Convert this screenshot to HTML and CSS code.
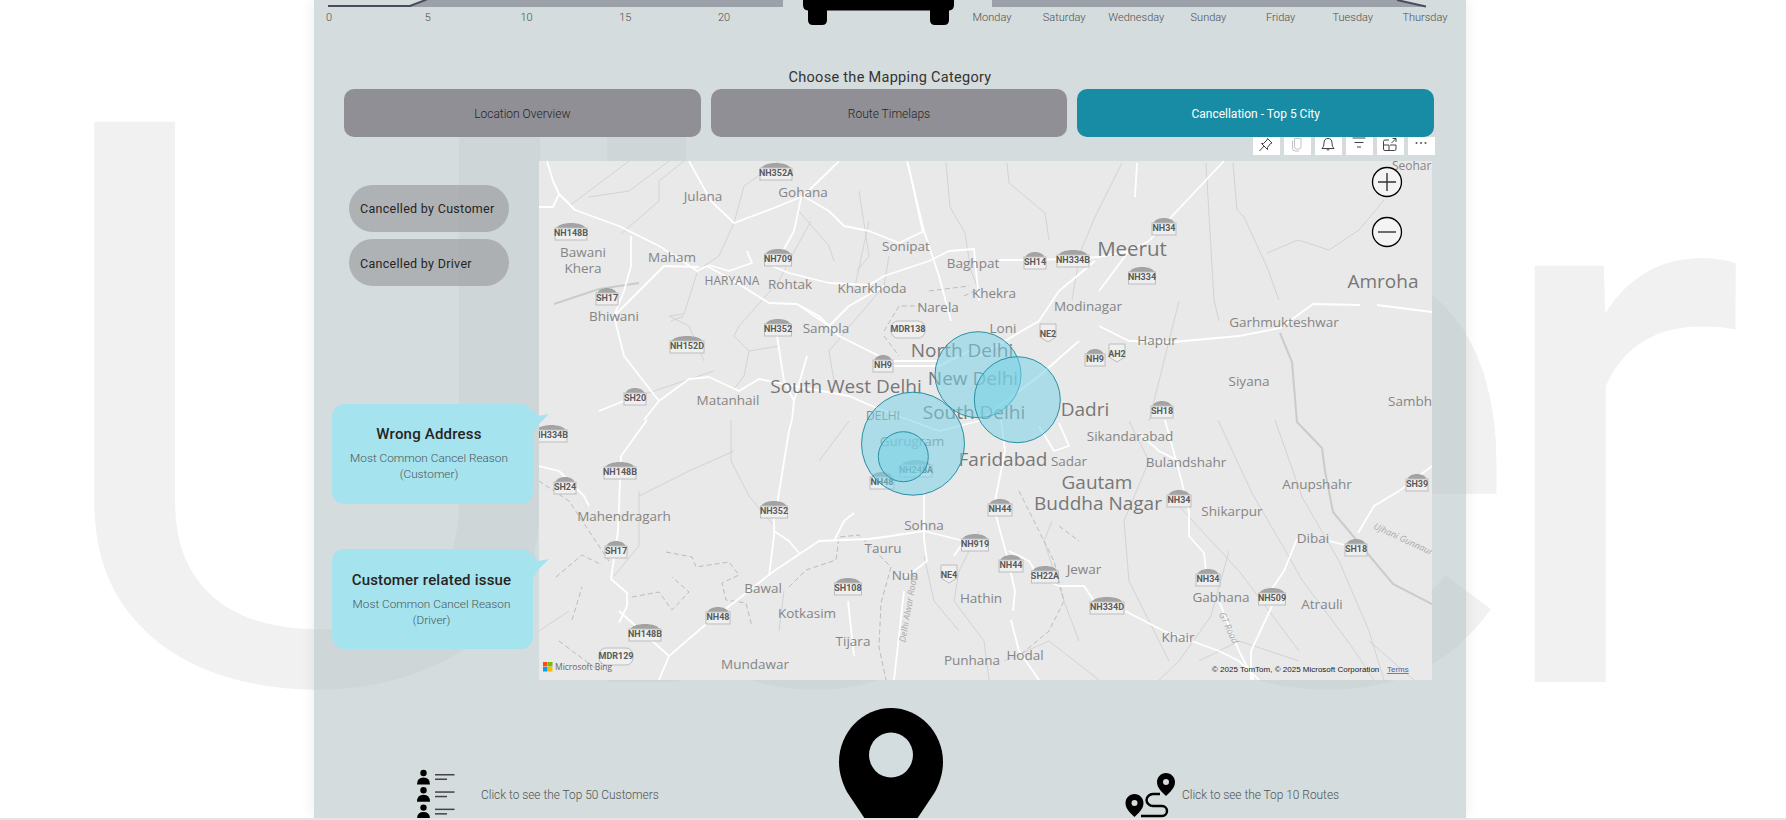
FILE: index.html
```html
<!DOCTYPE html>
<html lang="en">
<head>
    <meta charset="UTF-8">
    <title>Uber Dashboard</title>
    <link rel="stylesheet" href="styles.css">
</head>
<body>
<div class="page">
    <div class="watermark"><span class="wm-u">U</span><span class="wm-b">b</span><span class="wm-e">e</span><span class="wm-r">r</span></div>

    <main class="panel">
        <section class="top-strip">
            <div class="chart chart-left">
                <svg class="chart-area" width="455" height="8" viewBox="0 0 455 8">
                    <polygon points="0,6 82,6 100,0 455,0 455,7 0,7" fill="#9ca0a9"/>
                    <polyline points="0,6 82,6 100,-1" fill="none" stroke="#4b4b5e" stroke-width="2"/>
                </svg>
                <div class="ticks ticks-left">
                    <span class="tick"><span>0</span></span>
                    <span class="tick"><span>5</span></span>
                    <span class="tick"><span>10</span></span>
                    <span class="tick"><span>15</span></span>
                    <span class="tick"><span>20</span></span>
                </div>
            </div>
            <svg class="car" width="151" height="26" viewBox="0 0 151 26">
                <path d="M0 0H151V5Q151 10 146 10.500H146V20Q146 25 141 25H132Q127 25 127 20V10.500H24V20Q24 25 19 25H10Q5 25 5 20V10.500Q0 10 0 5Z" fill="#000"/>
            </svg>
            <div class="chart chart-right">
                <svg class="chart-area" width="434" height="8" viewBox="0 0 434 8">
                    <polygon points="0,0 405,0 434,7 0,7" fill="#9ca0a9"/>
                    <polyline points="405,0 434,6.500" fill="none" stroke="#4b4b5e" stroke-width="2"/>
                </svg>
                <div class="ticks ticks-right">
                    <span class="tick"><span>Monday</span></span>
                    <span class="tick"><span>Saturday</span></span>
                    <span class="tick"><span>Wednesday</span></span>
                    <span class="tick"><span>Sunday</span></span>
                    <span class="tick"><span>Friday</span></span>
                    <span class="tick"><span>Tuesday</span></span>
                    <span class="tick"><span>Thursday</span></span>
                </div>
            </div>
        </section>

        <h2 class="choose-title">Choose the Mapping Category</h2>

        <nav class="category-row">
            <div class="category-btn">Location Overview</div>
            <div class="category-btn">Route Timelaps</div>
            <div class="category-btn active">Cancellation - Top 5 City</div>
        </nav>

        <section class="map-row">
            <div class="visual-tools">
                <span class="tool"><svg width="16" height="18" viewBox="0 0 16 18" fill="none" stroke="#444" stroke-width="1"><path d="M9.500 1.500L14 6L12.500 6.500L9.500 10.500L9.500 12.500L3.500 6.500L5.500 6.500L9 3ZM6 9L1.500 14"/></svg></span>
                <span class="tool"><svg width="16" height="18" viewBox="0 0 16 18" fill="none" stroke="#c4c4c4" stroke-width="1"><path d="M5.500 1.500H12V10Q12 12 10 12H7.500Q5.500 12 5.500 10ZM3.500 3.500V11.500Q3.500 14 6 14H10"/></svg></span>
                <span class="tool"><svg width="16" height="18" viewBox="0 0 16 18" fill="none" stroke="#444" stroke-width="1"><path d="M2 11.500Q4 10 4 6Q4 1.500 8 1.500Q12 1.500 12 6Q12 10 14 11.500ZM6.500 11.500Q8 15 9.500 11.500"/></svg></span>
                <span class="tool"><svg width="16" height="18" viewBox="0 0 16 18" fill="none" stroke="#444" stroke-width="1"><path d="M1.500 1H14.500M3.500 5.500H12.500M6 10H10" /></svg></span>
                <span class="tool"><svg width="16" height="18" viewBox="0 0 16 18" fill="none" stroke="#444" stroke-width="1"><path d="M7 3H3Q1.500 3 1.500 4.500V8H7V13.500H3Q1.500 13.500 1.500 12V8M7 13.500H12.500Q14 13.500 14 12V8H8M9.500 6L14 1.500M10.500 1.500H14V5"/></svg></span>
                <span class="tool"><svg width="16" height="18" viewBox="0 0 16 18" fill="#555"><circle cx="3.500" cy="6" r="1"/><circle cx="8" cy="6" r="1"/><circle cx="12.500" cy="6" r="1"/></svg></span>
            </div>

            <aside class="side-col">
                <div class="pill">Cancelled by Customer</div>
                <div class="pill pill-driver">Cancelled by Driver</div>

                <div class="callout callout-first">
                    <div class="callout-title">Wrong Address</div>
                    <div class="callout-sub">Most Common Cancel Reason<br>(Customer)</div>
                </div>
                <div class="callout callout-second">
                    <div class="callout-title">Customer related issue</div>
                    <div class="callout-sub">Most Common Cancel Reason<br>(Driver)</div>
                </div>
            </aside>

            <svg class="map" width="893" height="519" viewBox="0 0 893 519">
                <defs>
                    <g id="s20"><path d="M-9 -5C-7 -13 7 -13 9 -5Z" fill="#a3a3a3"/><rect x="-10" y="-6" width="20" height="12" fill="#efefef" stroke="#bdbdbd"/></g>
                    <g id="s22"><path d="M-10 -5C-8 -13 8 -13 10 -5Z" fill="#a3a3a3"/><rect x="-11" y="-6" width="22" height="12" fill="#efefef" stroke="#bdbdbd"/></g>
                    <g id="s24"><path d="M-11 -5C-9 -13 9 -13 11 -5Z" fill="#a3a3a3"/><rect x="-12" y="-6" width="24" height="12" fill="#efefef" stroke="#bdbdbd"/></g>
                    <g id="s27"><path d="M-13 -5C-11 -13 11 -13 13 -5Z" fill="#a3a3a3"/><rect x="-13.500" y="-6" width="27" height="12" fill="#efefef" stroke="#bdbdbd"/></g>
                    <g id="s32"><path d="M-15 -5C-13 -13 13 -13 15 -5Z" fill="#a3a3a3"/><rect x="-16" y="-6" width="32" height="12" fill="#efefef" stroke="#bdbdbd"/></g>
                    <g id="s34"><path d="M-16 -5C-14 -13 14 -13 16 -5Z" fill="#a3a3a3"/><rect x="-17" y="-6" width="34" height="12" fill="#efefef" stroke="#bdbdbd"/></g>
                    <g id="sr34"><rect x="-17" y="-9" width="34" height="17" rx="7" fill="#efefef" stroke="#bdbdbd"/></g>
                    <g id="hex"><path d="M-8 -9H8V4L0 9L-8 4Z" fill="#efefef" stroke="#bdbdbd"/></g>
                </defs>

                <rect width="893" height="519" fill="#e9e9e9"/>

                <g class="rivers">
                    <path d="M30 45L90 0M50 36L90 30L130 0M82 73L120 40L120 20L145 0M240 0L205 25L195 62L180 95L165 105"/>
                    <path d="M258 48L290 85L295 100M272 60L250 100L240 120L200 165L195 175L210 190L240 185M210 190L205 215L195 228"/>
                    <path d="M158 112L145 153L130 155L150 165L165 200M145 155L132 160M100 235L175 210"/>
                    <path d="M320 30L330 95L318 110M330 60L315 130M350 95L345 125L315 160L290 190L295 220"/>
                    <path d="M407 2L411 46L426 72L432 110L440 130M468 2L470 22L506 52L510 79M583 2L556 56L541 92L533 139"/>
                    <path d="M667 2L675 139L680 160M694 2L698 49L705 56L728 106L740 139M845 39L820 69L790 89L759 79L728 92"/>
                    <path d="M640 140L625 200L610 260M736 259L763 336L800 400L830 470L845 519M679 259L713 332L746 389L763 419L813 486L835 519"/>
                    <path d="M640 345L700 410L760 490M690 390L672 455L640 500L620 519M590 260L610 300L585 360L590 420L630 500"/>
                    <path d="M513 360L505 380L525 440L540 480M192 259L192 300L210 335L235 365M100 330L100 385L75 415M195 290L150 310L100 335"/>
                    <path d="M440 370L420 410L415 440L445 480L450 519M385 395L395 440L420 470M465 500L510 480L560 519M660 500L700 480L760 500M830 480L875 519"/>
                    <path d="M0 470L30 450M310 260L280 300M245 430L240 470"/>
                </g>
                <path class="river-thick" d="M741 172L753 201L758 261L783 287L786 310L794 351L819 381L854 423L893 443M15 143L60 128L100 122"/>

                <g class="dashes">
                    <path d="M127 391L153 396L157 406L190 401L200 414L183 422L187 439L207 442L213 466M17 416L43 394L63 404M33 459L43 426M93 436L120 431L133 449L150 431L133 416"/>
                    <path d="M250 426L267 409L297 399L300 376L320 374L352 406L342 442L340 486L347 519"/>
                    <path d="M345 170L360 145L385 145M345 175L360 195M390 130L430 125M425 135L440 128"/>
                    <path d="M480 330L500 370L515 400L525 440L510 470L480 495M520 365L540 380"/>
                    <path d="M0 320L30 340L50 370L70 400M20 480L60 510"/>
                </g>

                <g class="roads">
                    <path d="M8 0L14 20L20 33L36 49L80 65L120 85L148 103L158 110L168 105L195 120L230 142L258 143L280 155L300 175L330 190L350 200L400 200"/>
                    <path d="M0 46L14 46L20 33M20 33L36 49M150 0L172 40L195 62L240 45L264 35L290 10L300 0"/>
                    <path d="M264 35L290 50L305 65L330 70L360 82L385 70L368 0M385 70L400 115L412 160"/>
                    <path d="M262 37L255 70L245 88M233 105L250 112L290 122L330 124L345 115L390 100L410 90L435 88L440 140"/>
                    <path d="M170 104L190 110L213 102L208 90M258 143L290 165L310 145L345 125"/>
                    <path d="M92 75L92 105L85 130L75 155L85 195L120 240M160 106L125 105L105 125L75 155"/>
                    <path d="M238 175L245 220L255 240L253 259M120 240L150 218L170 216L200 230L220 218L250 224L310 235L340 248M60 250L90 238M120 240L105 259M255 240L268 195"/>
                    <path d="M108 259L82 295L79 370L72 418L88 432L88 445L80 462M0 305L20 310L45 335L50 345M80 450L130 495M120 519L130 495L165 465L235 410L280 380L330 378L345 376L385 370L425 380L415 395"/>
                    <path d="M235 350L235 375L230 415M237 350L250 270L253 259M235 370L250 380L260 392M295 380L305 360L315 352"/>
                    <path d="M385 330L385 378L388 400L375 410L366 415M309 440L315 495M355 519L365 430"/>
                    <path d="M462 259L466 290L456 340M457 355L468 395L476 430L474 450M472 459L480 490L500 519M470 390L490 400L500 416L520 425L545 425L555 440"/>
                    <path d="M586 450L625 470L680 490L700 500L720 519M626 259L640 310L650 350L650 375L665 392L667 410M600 272L620 290L640 300"/>
                    <path d="M758 378L745 410L730 432M733 445L712 490L712 519M680 440L700 490L715 519M790 380L810 385M819 372L835 345L860 330L893 305"/>
                    <path d="M520 262L530 285L515 290L500 265M685 0L636 52L610 80L590 90L560 130M369 2L384 72M598 2L596 36M460 99L500 99L560 96L590 90"/>
                    <path d="M634 181L700 175L741 167L774 143L821 144M838 144L893 151M560 165L590 180L634 181M440 195L500 160L520 130L556 100M340 205L400 205L430 190M340 248L400 270L440 260L500 215L540 180"/>
                </g>

                <g class="labels">
                    <text x="164" y="36">Julana</text>
                    <text x="264" y="32">Gohana</text>
                    <text x="44" y="92">Bawani</text>
                    <text x="44" y="108">Khera</text>
                    <text x="133" y="97">Maham</text>
                    <text class="lab-xs" x="193" y="121">HARYANA</text>
                    <text x="251" y="124">Rohtak</text>
                    <text x="333" y="128">Kharkhoda</text>
                    <text x="367" y="86">Sonipat</text>
                    <text x="434" y="103">Baghpat</text>
                    <text x="455" y="133">Khekra</text>
                    <text x="399" y="147">Narela</text>
                    <text x="287" y="168">Sampla</text>
                    <text x="75" y="156">Bhiwani</text>
                    <text x="189" y="240">Matanhail</text>
                    <text class="lab-lg" x="307" y="227">South West Delhi</text>
                    <text class="lab-lg" x="423" y="191">North Delhi</text>
                    <text class="lab-lg" x="434" y="219">New Delhi</text>
                    <text class="lab-lg" x="435" y="253">South Delhi</text>
                    <text class="lab-xs" x="344" y="256">DELHI</text>
                    <text x="373" y="281">Gurugram</text>
                    <text class="lab-lg" x="464" y="300">Faridabad</text>
                    <text class="lab-lg" x="546" y="250">Dadri</text>
                    <text x="591" y="276">Sikandarabad</text>
                    <text x="530" y="301">Sadar</text>
                    <text x="464" y="168">Loni</text>
                    <text x="549" y="146">Modinagar</text>
                    <text x="618" y="180">Hapur</text>
                    <text class="lab-lg lab-meerut" x="593" y="90">Meerut</text>
                    <text class="lab-lg" x="844" y="122">Amroha</text>
                    <text class="lab-sm" x="876" y="6">Seohara</text>
                    <text x="745" y="162">Garhmukteshwar</text>
                    <text x="710" y="221">Siyana</text>
                    <text class="lab-start" x="849" y="241">Sambhal</text>
                    <text x="778" y="324">Anupshahr</text>
                    <text x="647" y="302">Bulandshahr</text>
                    <text class="lab-lg" x="558" y="323">Gautam</text>
                    <text class="lab-lg" x="559" y="344">Buddha Nagar</text>
                    <text x="693" y="351">Shikarpur</text>
                    <text x="774" y="378">Dibai</text>
                    <text x="545" y="409">Jewar</text>
                    <text x="682" y="437">Gabhana</text>
                    <text x="783" y="444">Atrauli</text>
                    <text x="639" y="477">Khair</text>
                    <text x="486" y="495">Hodal</text>
                    <text x="442" y="438">Hathin</text>
                    <text x="433" y="500">Punhana</text>
                    <text x="385" y="365">Sohna</text>
                    <text x="344" y="388">Tauru</text>
                    <text x="366" y="415">Nuh</text>
                    <text x="224" y="428">Bawal</text>
                    <text x="268" y="453">Kotkasim</text>
                    <text x="314" y="481">Tijara</text>
                    <text x="216" y="504">Mundawar</text>
                    <text x="85" y="356">Mahendragarh</text>
                    <text class="lab-road" transform="translate(364 481) rotate(-80)">Delhi Alwar Road</text>
                    <text class="lab-road" transform="translate(682 452) rotate(65)">GT Road</text>
                    <text class="lab-road" transform="translate(835 365) rotate(25)">Ujhani Gunnaur Road</text>
                </g>

                <g class="shields">
                    <use href="#s32" x="237" y="13"/><text x="237" y="13">NH352A</text>
                    <use href="#s32" x="32" y="73"/><text x="32" y="73">NH148B</text>
                    <use href="#s27" x="239" y="99"/><text x="239" y="99">NH709</text>
                    <use href="#s22" x="68" y="138"/><text x="68" y="138">SH17</text>
                    <use href="#s27" x="239" y="169"/><text x="239" y="169">NH352</text>
                    <use href="#s34" x="148" y="186"/><text x="148" y="186">NH152D</text>
                    <use href="#sr34" x="369" y="169"/><text x="369" y="169">MDR138</text>
                    <use href="#s20" x="344" y="205"/><text x="344" y="205">NH9</text>
                    <use href="#s22" x="96" y="238"/><text x="96" y="238">SH20</text>
                    <use href="#s32" x="12" y="275"/><text x="12" y="275">NH334B</text>
                    <use href="#s32" x="81" y="312"/><text x="81" y="312">NH148B</text>
                    <use href="#s22" x="26" y="327"/><text x="26" y="327">SH24</text>
                    <use href="#s22" x="77" y="391"/><text x="77" y="391">SH17</text>
                    <use href="#s27" x="235" y="351"/><text x="235" y="351">NH352</text>
                    <use href="#s24" x="179" y="457"/><text x="179" y="457">NH48</text>
                    <use href="#s32" x="106" y="474"/><text x="106" y="474">NH148B</text>
                    <use href="#sr34" x="77" y="496"/><text x="77" y="496">MDR129</text>
                    <use href="#s27" x="309" y="428"/><text x="309" y="428">SH108</text>
                    <use href="#s27" x="436" y="384"/><text x="436" y="384">NH919</text>
                    <use href="#hex" x="410" y="413"/><text x="410" y="415">NE4</text>
                    <use href="#s24" x="343" y="322"/><text x="343" y="322">NH48</text>
                    <use href="#s32" x="377" y="310"/><text x="377" y="310">NH248A</text>
                    <use href="#s24" x="461" y="349"/><text x="461" y="349">NH44</text>
                    <use href="#s24" x="472" y="405"/><text x="472" y="405">NH44</text>
                    <use href="#s27" x="506" y="416"/><text x="506" y="416">SH22A</text>
                    <use href="#s34" x="568" y="447"/><text x="568" y="447">NH334D</text>
                    <use href="#s24" x="640" y="340"/><text x="640" y="340">NH34</text>
                    <use href="#s24" x="669" y="419"/><text x="669" y="419">NH34</text>
                    <use href="#s27" x="733" y="438"/><text x="733" y="438">NH509</text>
                    <use href="#s22" x="817" y="389"/><text x="817" y="389">SH18</text>
                    <use href="#s22" x="878" y="324"/><text x="878" y="324">SH39</text>
                    <use href="#s24" x="625" y="68"/><text x="625" y="68">NH34</text>
                    <use href="#s22" x="496" y="102"/><text x="496" y="102">SH14</text>
                    <use href="#s32" x="534" y="100"/><text x="534" y="100">NH334B</text>
                    <use href="#s27" x="603" y="117"/><text x="603" y="117">NH334</text>
                    <use href="#hex" x="509" y="172"/><text x="509" y="174">NE2</text>
                    <use href="#hex" x="578" y="192"/><text x="578" y="194">AH2</text>
                    <use href="#s20" x="556" y="199"/><text x="556" y="199">NH9</text>
                    <use href="#s22" x="623" y="251"/><text x="623" y="251">SH18</text>
                </g>

                <g class="bubbles">
                    <circle cx="439" cy="213.700" r="43"/>
                    <circle cx="478.300" cy="238.700" r="43"/>
                    <circle cx="374" cy="282.700" r="51.500"/>
                    <circle cx="364.300" cy="295.700" r="25"/>
                </g>

                <g class="zoom-btn">
                    <circle cx="848" cy="21" r="14.500"/>
                    <path d="M839 21H857M848 12V30"/>
                    <circle cx="848" cy="71" r="14.500"/>
                    <path d="M839 71H857"/>
                </g>

                <g>
                    <rect x="4" y="501" width="4.500" height="4.500" fill="#f25022"/>
                    <rect x="9" y="501" width="4.500" height="4.500" fill="#7fba00"/>
                    <rect x="4" y="506" width="4.500" height="4.500" fill="#00a4ef"/>
                    <rect x="9" y="506" width="4.500" height="4.500" fill="#ffb900"/>
                    <text class="bing" x="16" y="509">Microsoft Bing</text>
                    <text class="copy" x="673" y="511">© 2025 TomTom, © 2025 Microsoft Corporation</text>
                    <text class="terms" x="848" y="511">Terms</text>
                </g>
            </svg>
        </section>

        <footer class="footer-row">
            <div class="foot-link foot-customers">
                <svg width="38" height="49" viewBox="0 0 38 49">
                    <g id="cust-row">
                        <circle cx="6.500" cy="4" r="3.200"/>
                        <path d="M0 15.500Q0 8.500 6.500 8.500Q13 8.500 13 15.500Z"/>
                        <rect x="18" y="5" width="19.500" height="1.500" fill="#444"/>
                        <rect x="18" y="9.500" width="12" height="1.500" fill="#444"/>
                    </g>
                    <use href="#cust-row" y="17.300"/>
                    <use href="#cust-row" y="34.600"/>
                </svg>
                <span class="foot-text">Click to see the Top 50 Customers</span>
            </div>
            <svg class="big-pin" width="104" height="150" viewBox="0 0 104 150">
                <path d="M52 0C80 0 104 24 104 54C104 66 100 76 96 84L52 150L8 84C4 76 0 66 0 54C0 24 24 0 52 0Z"/>
                <ellipse cx="52" cy="47" rx="22" ry="22.500" fill="#d3dcde"/>
            </svg>
            <div class="foot-link foot-routes">
                <svg width="50" height="46" viewBox="0 0 50 46">
                    <path fill-rule="evenodd" d="M41 1C46 1 50 5 50 10C50 16 45 20 41 24C37 20 32 16 32 10C32 5 36 1 41 1ZM41 7A3 3 0 1 0 41 13A3 3 0 1 0 41 7Z"/>
                    <path fill-rule="evenodd" d="M9.500 22C14.500 22 18.500 26 18.500 31C18.500 37 13.500 41 9.500 45C5.500 41 0.500 37 0.500 31C0.500 26 4.500 22 9.500 22ZM9.500 28A3 3 0 1 0 9.500 34A3 3 0 1 0 9.500 28Z"/>
                    <path d="M35 22H28C24.500 22 21.500 25 21.500 28C21.500 31 24.500 34 28 34H37C40 34 42 36.500 42 39C42 41.500 40 44 37 44H16" fill="none" stroke="#000" stroke-width="2.500"/>
                </svg>
                <span class="foot-text">Click to see the Top 10 Routes</span>
            </div>
        </footer>
    </main>
</div>
</body>
</html>
```

FILE: styles.css
```css
* {
    box-sizing: border-box;
}
body {
    margin: 0;
    background-color: #fff;
    font-family: Roboto, "Liberation Sans", sans-serif;
    color: #252423;
}
.page {
    position: relative;
    height: 820px;
    overflow: hidden;
    border-bottom: 2px solid #e4e4e4;
}

/* big faded logo word behind everything */
.watermark {
    position: absolute;
    left: 0;
    top: 19px;
    font-size: 788px;
    font-weight: 400;
    line-height: 788px;
    color: #f1f1f1;
    white-space: nowrap;
}
.watermark span {
    display: inline-block;
    transform-origin: 0 50%;
}
.wm-u {
    margin-left: 35px;
    transform: scaleX(1.1);
}
.wm-b {
    margin-left: 2px;
    transform: scaleX(1.1);
}
.wm-e {
    margin-left: 98px;
    transform: scaleX(1.05);
}
.wm-r {
    margin-left: -26px;
}

.panel {
    position: relative;
    width: 1152px;
    height: 818px;
    margin-left: 314px;
    background-color: rgba(179, 194, 196, 0.57);
    box-shadow: 0 0 14px rgba(0, 0, 0, 0.08);
}

/* cut off charts on top */
.top-strip {
    display: flex;
    align-items: flex-start;
    height: 69px;
    padding-left: 14px;
}
.chart-area {
    display: block;
}
.chart-left {
    width: 455px;
}
.chart-right {
    width: 434px;
    margin-left: 38px;
}
.car {
    margin-left: 20px;
}
.ticks {
    display: flex;
    justify-content: space-between;
    margin-top: 3px;
    font-size: 11px;
    font-weight: 300;
    line-height: 14px;
    color: #4e4e4e;
}
.ticks-left {
    width: 395px;
    margin-left: 1px;
}
.ticks-right {
    width: 433px;
}
.tick {
    display: flex;
    justify-content: center;
    width: 0;
    white-space: nowrap;
}

.choose-title {
    margin: 0 0 3px;
    font-size: 14.5px;
    font-weight: 400;
    line-height: 17px;
    letter-spacing: 0.3px;
    text-align: center;
    color: #333;
}
.category-row {
    display: flex;
    gap: 10px;
    height: 48px;
    margin: 0 32px 0 30px;
}
.category-btn {
    flex: 1;
    display: flex;
    align-items: center;
    justify-content: center;
    padding-top: 2px;
    background-color: #908f95;
    border-radius: 10px;
    font-size: 12px;
    font-weight: 300;
}
.category-btn.active {
    background-color: #178ca4;
    color: #fff;
    font-weight: 400;
}

.map-row {
    position: relative;
    display: flex;
    height: 519px;
    margin-top: 24px;
}
.visual-tools {
    position: absolute;
    top: -24px;
    right: 31px;
    display: flex;
    gap: 3.5px;
}
.tool {
    display: flex;
    justify-content: center;
    width: 27.5px;
    height: 18px;
    background-color: #fff;
}
.side-col {
    position: relative;
    z-index: 2;
    display: flex;
    flex-direction: column;
    flex: 0 0 225px;
}
.pill {
    display: flex;
    align-items: center;
    width: 160px;
    height: 47px;
    margin: 24px 0 0 35px;
    padding-left: 11px;
    border-radius: 24px;
    background-color: rgba(150, 150, 155, 0.6);
    font-size: 12.5px;
    font-weight: 400;
    letter-spacing: 0.3px;
    white-space: nowrap;
}
.pill-driver {
    margin-top: 7px;
    padding-top: 2px;
}
.callout {
    position: relative;
    width: 201px;
    height: 100px;
    margin-left: 18px;
    border-radius: 12px;
    background-color: #a5e3ef;
    text-align: center;
}
.callout::after {
    content: "";
    position: absolute;
    left: 100%;
    top: 4px;
    width: 16px;
    height: 25px;
    background-color: #a5e3ef;
    clip-path: polygon(0 0, 5px 8px, 16px 6px, 5px 17px, 0 25px);
}
.callout-first {
    margin-top: 118px;
    padding-top: 21px;
    padding-right: 7px;
}
.callout-second {
    margin-top: 45px;
    padding-top: 22px;
    padding-right: 2px;
}
.callout-title {
    font-size: 15px;
    font-weight: 500;
    line-height: 18px;
    letter-spacing: 0.2px;
}
.callout-sub {
    margin-top: 6.5px;
    font-size: 11.8px;
    font-weight: 300;
    line-height: 16px;
    color: #4e5456;
}

/* map picture */
.map {
    display: block;
    position: relative;
    z-index: 1;
}
.rivers path,
.river-thick {
    fill: none;
    stroke: #d3d3d3;
    stroke-width: 1;
}
.river-thick {
    stroke: #cbcbcb;
    stroke-width: 2;
}
.dashes path {
    fill: none;
    stroke: #bcbcbc;
    stroke-width: 1;
    stroke-dasharray: 5 3;
}
.roads path {
    fill: none;
    stroke: #fff;
    stroke-width: 1.8;
    stroke-linejoin: round;
}
.labels text {
    font-family: "Open Sans", sans-serif;
    font-size: 13.5px;
    fill: #858585;
    text-anchor: middle;
    dominant-baseline: middle;
}
.labels .lab-lg {
    font-size: 19px;
    fill: #777;
}
.labels .lab-meerut {
    font-size: 20.5px;
}
.labels .lab-xs {
    font-size: 12px;
}
.labels .lab-sm {
    font-size: 12px;
}
.labels .lab-start {
    text-anchor: start;
}
.labels .lab-road {
    font-size: 9px;
    fill: #aaa;
    font-style: italic;
    text-anchor: start;
}
.shields text {
    font-family: Roboto, sans-serif;
    font-size: 9px;
    font-weight: 700;
    fill: #5a5a5a;
    text-anchor: middle;
    dominant-baseline: middle;
}
.bubbles circle {
    fill: rgba(120, 210, 230, 0.55);
    stroke: #2a8fa4;
    stroke-width: 1;
}
.zoom-btn circle {
    fill: #f4f4f4;
    stroke: #000;
    stroke-width: 1.3;
}
.zoom-btn path {
    fill: none;
    stroke: #333;
    stroke-width: 1.4;
}
.bing {
    font-family: "Open Sans", sans-serif;
    font-size: 8.5px;
    fill: #666;
}
.copy,
.terms {
    font-family: "Liberation Sans", sans-serif;
    font-size: 8px;
    fill: #222;
}
.terms {
    fill: #4c5fa8;
    text-decoration: underline;
}

/* links under the map */
.footer-row {
    display: flex;
    align-items: flex-start;
    height: 138px;
    overflow: hidden;
}
.foot-link {
    display: flex;
    align-items: center;
}
.foot-customers {
    width: 525px;
    margin-top: 89px;
    padding-left: 103px;
}
.foot-customers svg {
    flex: none;
    margin-right: 26px;
}
.foot-customers .foot-text {
    padding-top: 2px;
}
.big-pin {
    flex: none;
    margin-top: 28px;
}
.foot-routes {
    margin: 92px 0 0 182px;
}
.foot-routes svg {
    flex: none;
    margin-right: 7px;
}
.foot-text {
    font-size: 11.9px;
    font-weight: 300;
    color: #4e5456;
    white-space: nowrap;
}
```
